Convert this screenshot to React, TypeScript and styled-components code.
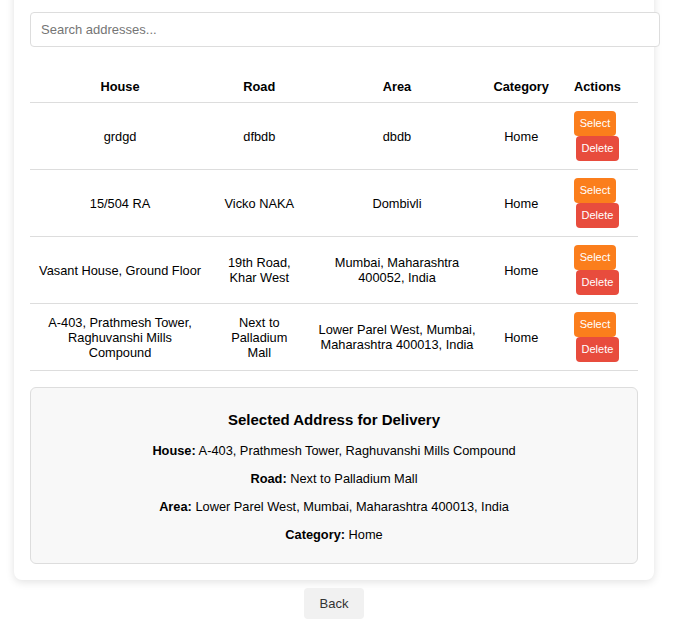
import React from "react";
import styled, { createGlobalStyle } from "styled-components";

const GlobalStyle = createGlobalStyle`
  html, body {
    margin: 0;
    padding: 0;
    background: #ffffff;
    font-family: "Liberation Sans", Arial, sans-serif;
    color: #000;
  }
  * { font-family: "Liberation Sans", Arial, sans-serif; }
`;

const Page = styled.div`
  width: 640px;
  margin-left: 14px;
  display: flex;
  flex-direction: column;
  align-items: center;
`;

const Card = styled.div`
  width: 640px;
  box-sizing: border-box;
  margin-top: -20px;
  padding: 32px 16px 16px;
  background: #fff;
  border-radius: 8px;
  box-shadow: 0 2px 8px rgba(0, 0, 0, 0.12);
`;

const SearchInput = styled.input`
  display: block;
  width: 608px;
  box-sizing: content-box;
  height: 17px;
  padding: 8px 10px;
  margin: 0;
  border: 1px solid #ddd;
  border-radius: 4px;
  font-size: 13px;
  line-height: 17px;
  color: #333;
  outline: none;
  &::placeholder { color: #757575; }
`;

const Table = styled.table`
  width: 100%;
  margin-top: 24px;
  border-collapse: collapse;
  font-size: 12.8px;
  line-height: 15px;
`;

const Th = styled.th`
  padding: 8px;
  text-align: center;
  font-weight: bold;
  border-bottom: 1px solid #ddd;
`;

const Td = styled.td`
  padding: 8px;
  text-align: center;
  border-bottom: 1px solid #ddd;
`;

const ActionButton = styled.button<{ $variant: "select" | "delete" }>`
  display: inline-block;
  border: none;
  border-radius: 4px;
  padding: 6px;
  font-size: 11px;
  line-height: 13px;
  color: #fff;
  cursor: pointer;
  background: ${(p) => (p.$variant === "select" ? "#fb7e1c" : "#e84c3d")};
  margin-right: ${(p) => (p.$variant === "select" ? "5px" : "0")};
`;

const SelectedBox = styled.div`
  margin-top: 16px;
  padding: 8px 15px;
  background: #f8f8f8;
  border: 1px solid #ddd;
  border-radius: 6px;
  text-align: center;
`;

const SelectedTitle = styled.h3`
  margin: 15px 0;
  font-size: 15px;
  line-height: 17px;
  font-weight: bold;
`;

const SelectedLine = styled.p`
  margin: 13px 0;
  font-size: 12.8px;
  line-height: 15px;
`;

const BackButton = styled.button`
  margin-top: 8px;
  height: 31px;
  padding: 0 16px;
  border: none;
  border-radius: 4px;
  background: #f1f1f1;
  color: #333;
  font-size: 13px;
  cursor: pointer;
`;

type Address = { house: string; road: string; area: string; category: string };

const addresses: Address[] = [
  { house: "grdgd", road: "dfbdb", area: "dbdb", category: "Home" },
  { house: "15/504 RA", road: "Vicko NAKA", area: "Dombivli", category: "Home" },
  {
    house: "Vasant House, Ground Floor",
    road: "19th Road, Khar West",
    area: "Mumbai, Maharashtra 400052, India",
    category: "Home",
  },
  {
    house: "A-403, Prathmesh Tower, Raghuvanshi Mills Compound",
    road: "Next to Palladium Mall",
    area: "Lower Parel West, Mumbai, Maharashtra 400013, India",
    category: "Home",
  },
];

export default function App() {
  const selected = addresses[3];
  return (
    <>
      <GlobalStyle />
      <Page>
        <Card>
          <SearchInput placeholder="Search addresses..." />
          <Table>
            <thead>
              <tr>
                <Th>House</Th>
                <Th>Road</Th>
                <Th>Area</Th>
                <Th>Category</Th>
                <Th>Actions</Th>
              </tr>
            </thead>
            <tbody>
              {addresses.map((a, i) => (
                <tr key={i}>
                  <Td>{a.house}</Td>
                  <Td>{a.road}</Td>
                  <Td>{a.area}</Td>
                  <Td>{a.category}</Td>
                  <Td>
                    <ActionButton $variant="select">Select</ActionButton>{" "}
                    <ActionButton $variant="delete">Delete</ActionButton>
                  </Td>
                </tr>
              ))}
            </tbody>
          </Table>
          <SelectedBox>
            <SelectedTitle>Selected Address for Delivery</SelectedTitle>
            <SelectedLine>
              <strong>House:</strong> {selected.house}
            </SelectedLine>
            <SelectedLine>
              <strong>Road:</strong> {selected.road}
            </SelectedLine>
            <SelectedLine>
              <strong>Area:</strong> {selected.area}
            </SelectedLine>
            <SelectedLine>
              <strong>Category:</strong> {selected.category}
            </SelectedLine>
          </SelectedBox>
        </Card>
        <BackButton>Back</BackButton>
      </Page>
    </>
  );
}
